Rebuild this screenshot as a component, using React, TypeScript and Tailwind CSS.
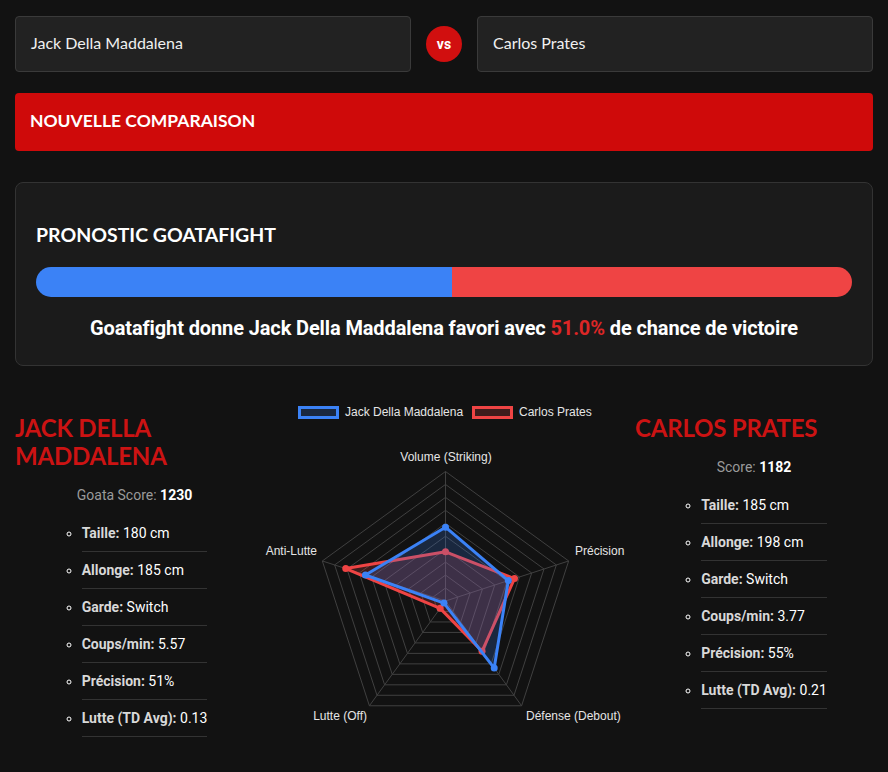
import React from 'react';

const axes = ['Volume (Striking)', 'Précision', 'Défense (Debout)', 'Lutte (Off)', 'Anti-Lutte'];

const fighters = [
  {
    name: 'Jack Della Maddalena',
    scoreLabel: 'Goata Score:',
    score: 1230,
    stats: [
      ['Taille:', '180 cm'],
      ['Allonge:', '185 cm'],
      ['Garde:', 'Switch'],
      ['Coups/min:', '5.57'],
      ['Précision:', '51%'],
      ['Lutte (TD Avg):', '0.13'],
    ],
    radar: [0.57, 0.51, 0.64, 0.02, 0.65],
  },
  {
    name: 'Carlos Prates',
    scoreLabel: 'Score:',
    score: 1182,
    stats: [
      ['Taille:', '185 cm'],
      ['Allonge:', '198 cm'],
      ['Garde:', 'Switch'],
      ['Coups/min:', '3.77'],
      ['Précision:', '55%'],
      ['Lutte (TD Avg):', '0.21'],
    ],
    radar: [0.38, 0.56, 0.48, 0.07, 0.81],
  },
];

const CX = 191.5;
const CY = 211;
const R = 129.5;

const pt = (i: number, r: number) => {
  const a = ((-90 + 72 * i) * Math.PI) / 180;
  return [CX + Math.cos(a) * R * r, CY + Math.sin(a) * R * r];
};

const poly = (vals: number[]) => vals.map((v, i) => pt(i, v).join(',')).join(' ');

const Radar = () => {
  const rings = [0.1, 0.2, 0.3, 0.4, 0.5, 0.6, 0.7, 0.8, 0.9, 1];
  // red first so the blue dataset sits on top, like the chart lib does
  const sets = [
    { vals: fighters[1].radar, stroke: '#ef4444', fill: 'rgba(239,68,68,0.2)' },
    { vals: fighters[0].radar, stroke: '#3b82f6', fill: 'rgba(59,130,246,0.2)' },
  ];
  return (
    <svg width="381" height="350" viewBox="0 0 381 350" style={{ fontFamily: '"Liberation Sans", Arial, sans-serif' }}>
      {/* legend */}
      <rect x="45.5" y="17.5" width="38" height="10" fill="rgba(59,130,246,0.2)" stroke="#3b82f6" strokeWidth="3" />
      <text x="91" y="26" fontSize="12" fill="#e5e5e5">Jack Della Maddalena</text>
      <rect x="219.5" y="17.5" width="38" height="10" fill="rgba(239,68,68,0.2)" stroke="#ef4444" strokeWidth="3" />
      <text x="265" y="26" fontSize="12" fill="#e5e5e5">Carlos Prates</text>

      {rings.map((r) => (
        <polygon key={r} points={poly([r, r, r, r, r])} fill="none" stroke="#404040" strokeWidth="1" />
      ))}
      {axes.map((_, i) => {
        const [x, y] = pt(i, 1);
        return <line key={i} x1={CX} y1={CY} x2={x} y2={y} stroke="#404040" strokeWidth="1" />;
      })}

      {sets.map((s, k) => (
        <g key={k}>
          <polygon points={poly(s.vals)} fill={s.fill} stroke={s.stroke} strokeWidth="3" strokeLinejoin="round" />
          {s.vals.map((v, i) => {
            const [x, y] = pt(i, v);
            return <circle key={i} cx={x} cy={y} r="3.5" fill={s.stroke} />;
          })}
        </g>
      ))}

      <text x="192" y="71" fontSize="12" fill="#e5e5e5" textAnchor="middle">Volume (Striking)</text>
      <text x="321" y="165" fontSize="12" fill="#e5e5e5">Précision</text>
      <text x="272" y="330" fontSize="12" fill="#e5e5e5">Défense (Debout)</text>
      <text x="113" y="330" fontSize="12" fill="#e5e5e5" textAnchor="end">Lutte (Off)</text>
      <text x="63" y="165" fontSize="12" fill="#e5e5e5" textAnchor="end">Anti-Lutte</text>
    </svg>
  );
};

const FighterColumn = ({ f, multiline }: { f: (typeof fighters)[number]; multiline?: boolean }) => (
  <div>
    <h2
      className={`text-[24px] leading-[28px] font-bold uppercase tracking-[-0.2px] text-[#cc1313] ${multiline ? 'w-[160px]' : ''}`}
      style={{ fontFamily: 'Lato, sans-serif' }}
    >
      {f.name}
    </h2>
    <p className="mt-[15px] text-center text-[14px] leading-5 text-[#9a9a9a]">
      {f.scoreLabel} <span className="font-bold text-white">{f.score}</span>
    </p>
    <div className="mt-[10px] flex justify-center">
      <ul className="w-fit list-[circle] pl-5 text-[14px] leading-5">
        {f.stats.map(([label, value]) => (
          <li key={label} className="border-b border-[#333] py-2 text-white">
            <span className="font-bold text-[#d8d8d8]">{label}</span> {value}
          </li>
        ))}
      </ul>
    </div>
  </div>
);

export default function App() {
  return (
    <div className="min-h-screen bg-[#121212] px-[15px] pt-4 pb-10 text-white" style={{ fontFamily: 'Roboto, sans-serif' }}>
      {/* fighter selection */}
      <div className="flex items-center gap-[15px]" style={{ fontFamily: 'Lato, sans-serif' }}>
        <div className="flex h-[56px] flex-1 items-center rounded border border-[#3a3a3a] bg-[#222] px-[15px] pb-[2px] text-[16px] text-[#f0f0f0]">
          Jack Della Maddalena
        </div>
        <div className="flex h-9 w-9 items-center justify-center rounded-full bg-[#d10f0f] text-[14px] font-bold text-white" style={{ fontFamily: 'Roboto, sans-serif' }}>
          vs
        </div>
        <div className="flex h-[56px] flex-1 items-center rounded border border-[#3a3a3a] bg-[#222] px-[15px] pb-[2px] text-[16px] text-[#f0f0f0]">
          Carlos Prates
        </div>
      </div>

      <button
        className="mt-[21px] flex h-[58px] w-full items-center rounded-sm bg-[#cf0a0a] px-[15px] pb-[2px] text-[17.5px] font-bold uppercase text-white"
        style={{ fontFamily: 'Lato, sans-serif' }}
      >
        Nouvelle comparaison
      </button>

      {/* prediction */}
      <div className="mt-[31px] rounded-lg border border-[#333] bg-[#1b1b1b] px-[20px] pt-[40px] pb-[25px]">
        <h3 className="text-[19.5px] font-bold uppercase leading-6 text-white" style={{ fontFamily: 'Lato, sans-serif' }}>
          Pronostic Goatafight
        </h3>
        <div className="mt-[20px] flex h-[30px] overflow-hidden rounded-full">
          <div className="h-full w-[51%] bg-[#3b82f6]" />
          <div className="h-full flex-1 bg-[#ef4444]" />
        </div>
        <p className="mt-[19px] text-center text-[20px] font-bold leading-6 tracking-[-0.12px] text-white">
          Goatafight donne Jack Della Maddalena favori avec <span className="text-[#dc2626]">51.0%</span> de chance de victoire
        </p>
      </div>

      {/* comparison */}
      <div className="mt-[24px] grid grid-cols-[239px_1fr_238px]">
        <div className="pt-[24px]">
          <FighterColumn f={fighters[0]} multiline />
        </div>
        <div className="flex justify-center">
          <Radar />
        </div>
        <div className="pt-[24px]">
          <FighterColumn f={fighters[1]} />
        </div>
      </div>
    </div>
  );
}
